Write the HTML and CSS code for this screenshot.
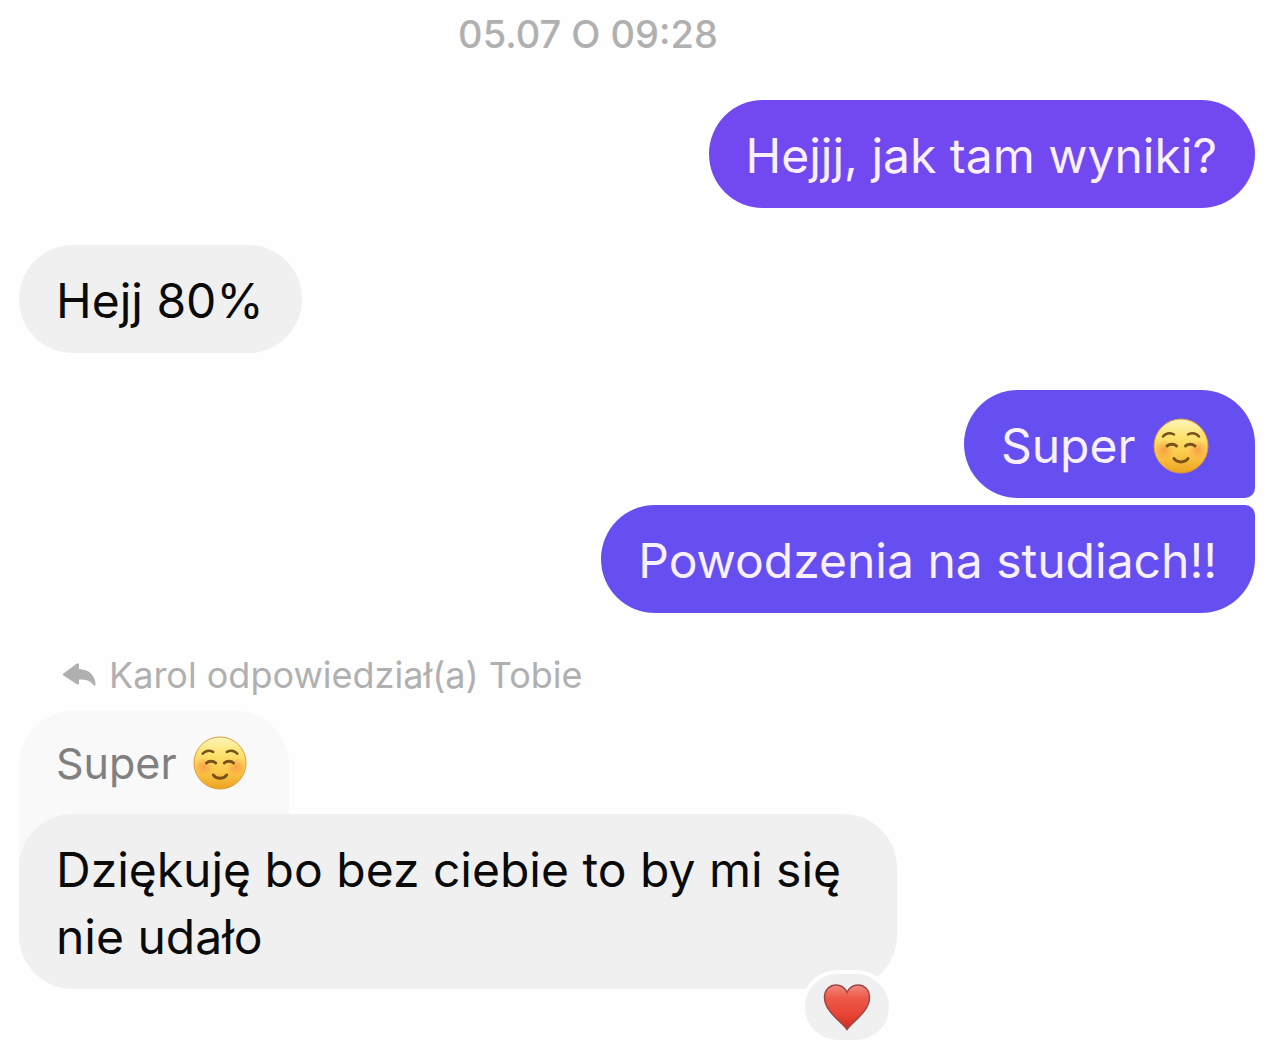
FILE: index.html
```html
<!DOCTYPE html>
<html lang="pl">
<head>
  <meta charset="UTF-8" />
  <meta name="viewport" content="width=device-width, initial-scale=1.0"/>
  <title>Czat</title>
  <link rel="stylesheet" href="styles.css">
</head>
<body>
  <svg class="defs" aria-hidden="true">
    <defs>
      <linearGradient id="face" x1="0" y1="0" x2="0" y2="1">
        <stop offset="0" stop-color="#fdf6bd"/>
        <stop offset="0.3" stop-color="#fce473"/>
        <stop offset="0.65" stop-color="#fbc94a"/>
        <stop offset="1" stop-color="#eda21f"/>
      </linearGradient>
      <radialGradient id="blush">
        <stop offset="0" stop-color="#f5813a" stop-opacity="0.6"/>
        <stop offset="1" stop-color="#f5813a" stop-opacity="0"/>
      </radialGradient>
      <linearGradient id="red" x1="0" y1="0" x2="0" y2="1">
        <stop offset="0" stop-color="#f08a7e"/>
        <stop offset="0.3" stop-color="#ec5848"/>
        <stop offset="0.65" stop-color="#ea4636"/>
        <stop offset="1" stop-color="#c92d25"/>
      </linearGradient>
    </defs>
    <symbol id="smile" viewBox="0 0 56 56">
      <circle cx="28" cy="28" r="27" fill="url(#face)" stroke="#dc9a3c" stroke-width="1"/>
      <circle cx="11" cy="32" r="10" fill="url(#blush)"/>
      <circle cx="45" cy="32" r="10" fill="url(#blush)"/>
      <g fill="none" stroke="#785019" stroke-width="2.5" stroke-linecap="round">
        <path d="M10 18.500C13 15 17 14.500 21 16.500"/>
        <path d="M46 18.500C43 15 39 14.500 35 16.500"/>
        <path d="M14 28C16.500 25.500 21 25.500 23.500 28" stroke-width="3"/>
        <path d="M42 28C39.500 25.500 35 25.500 32.500 28" stroke-width="3"/>
        <path d="M21 40.500C24 45 32 45 35 40.500" stroke-width="3"/>
      </g>
    </symbol>
  </svg>

  <main class="chat">
    <p class="timestamp">05.07 O 09:28</p>

    <div class="group sent">
      <p class="bubble first-tone">Hejjj, jak tam wyniki?</p>
    </div>

    <div class="group received">
      <p class="bubble">Hejj 80%</p>
    </div>

    <div class="group sent">
      <p class="bubble top">Super <svg class="emoji" role="img" aria-label="uśmiech"><use href="#smile"/></svg></p>
      <p class="bubble bottom">Powodzenia na studiach!!</p>
    </div>

    <div class="group received reply">
      <p class="reply-label">
        <svg class="reply-icon" viewBox="0 0 34 24" aria-hidden="true">
          <path d="M1.500 10.500L14.500 0.800Q17 -0.500 17 2V6C27 6.500 33 12 33.500 21Q33.500 24 31.500 22C28 17.500 24 16.500 17 16.500V19.500Q17 22.500 14.500 21L1.500 12.500Q0 11.500 1.500 10.500Z" fill="currentColor"/>
        </svg>
        Karol odpowiedział(a) Tobie
      </p>
      <p class="quote">Super <svg class="emoji" role="img" aria-label="uśmiech"><use href="#smile"/></svg></p>
      <div class="bubble long">
        Dziękuję bo bez ciebie to by mi się nie udało
        <span class="reaction">
          <svg class="heart" viewBox="0 0 48 48" role="img" aria-label="serce">
            <path d="M24 46.500C19 39 1.500 28.500 1.500 14.500C1.500 6.500 7 2 13 2C18 2 22 5 24 9.500C26 5 30 2 35 2C41 2 46.500 6.500 46.500 14.500C46.500 28.500 29 39 24 46.500Z" fill="url(#red)" stroke="#a04545" stroke-width="1.500"/>
          </svg>
        </span>
      </div>
    </div>
  </main>
</body>
</html>
```

FILE: styles.css
```css
* {
  box-sizing: border-box;
}

body {
  margin: 0;
  background: #fefefe;
  font-family: Inter, 'Liberation Sans', sans-serif;
}

p {
  margin: 0;
}

.defs {
  position: absolute;
  width: 0;
  height: 0;
}

.chat {
  display: flex;
  flex-direction: column;
  gap: 37px;
  padding: 12px 28px 64px 19px;
}

.timestamp {
  padding-right: 98px;
  margin-bottom: 7px;
  font-size: 38px;
  font-weight: 500;
  line-height: 44px;
  text-align: center;
  color: #b0b0b0;
}

.group {
  display: flex;
  flex-direction: column;
  gap: 7px;
}

.sent {
  align-items: flex-end;
}

.received {
  align-items: flex-start;
}

.bubble {
  position: relative;
  max-width: 71%;
  padding: 22px 38px 19px 37px;
  border-radius: 54px;
  font-size: 48px;
  line-height: 67px;
}

.sent .bubble {
  background: #664ff1;
  color: #f8f0ff;
}

.sent .first-tone {
  background: #7248f0;
}

.received .bubble {
  background: #f0f0f0;
  color: #0a0a0a;
}

.sent .top {
  border-bottom-right-radius: 10px;
}

.sent .bottom {
  border-top-right-radius: 10px;
}

.emoji {
  width: 56px;
  height: 56px;
  margin: -10px 8px 0 4px;
  vertical-align: -11px;
}

.reply {
  gap: 0;
}

.reply-label {
  display: flex;
  align-items: center;
  gap: 13px;
  padding: 2px 0 0 43px;
  margin-bottom: 13px;
  font-size: 36px;
  line-height: 46px;
  color: #b0b0b0;
}

.reply-icon {
  width: 34px;
  height: 24px;
}

.quote {
  padding: 26px 34px 78px 37px;
  margin-bottom: -54px;
  border-radius: 54px 54px 0 0;
  background: #f9f9f9;
  color: #808080;
  font-size: 43px;
  line-height: 52px;
}

.quote .emoji {
  width: 54px;
  height: 54px;
}

.reaction {
  position: absolute;
  right: 4px;
  bottom: -55px;
  display: flex;
  align-items: center;
  justify-content: center;
  width: 92px;
  height: 74px;
  border: 4px solid #fefefe;
  border-radius: 37px;
  background: #f0f0f0;
}

.heart {
  width: 48px;
  height: 48px;
}
```
